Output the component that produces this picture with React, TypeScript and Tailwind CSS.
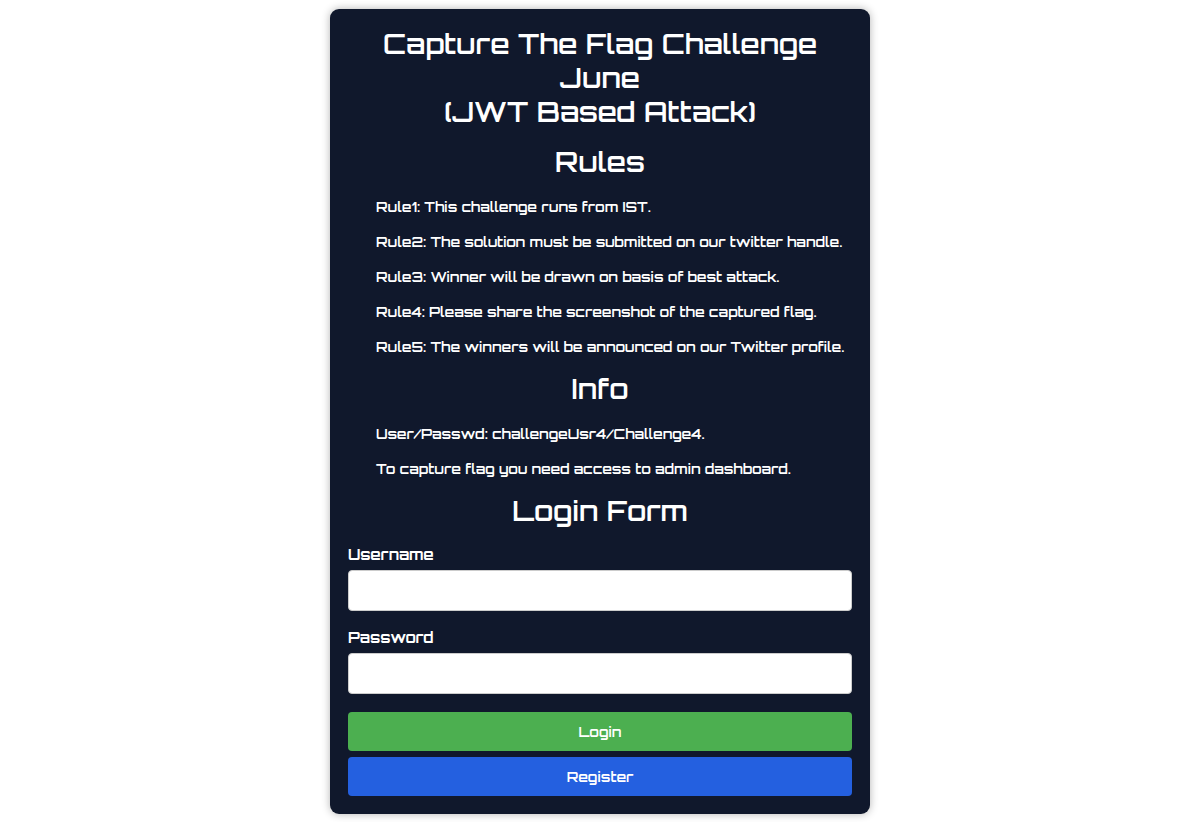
import React from "react";

const rules = [
    "Rule1: This challenge runs from IST.",
    "Rule2: The solution must be submitted on our twitter handle.",
    "Rule3: Winner will be drawn on basis of best attack.",
    "Rule4: Please share the screenshot of the captured flag.",
    "Rule5: The winners will be announced on our Twitter profile.",
];

const info = [
    "User/Passwd: challengeUsr4/Challenge4.",
    "To capture flag you need access to admin dashboard.",
];

function SectionTitle({ children }: { children: React.ReactNode }) {
    return <h2 className="mt-[15px] mb-[18px] text-center text-[28px] leading-[34px]">{children}</h2>;
}

function TextList({ items }: { items: string[] }) {
    return (
        <ul className="flex flex-col gap-[15px] pl-7">
            {items.map((item) => (
                <li key={item} className="whitespace-normal sm:whitespace-nowrap">
                    {item}
                </li>
            ))}
        </ul>
    );
}

function Field({ id, label, type }: { id: string; label: string; type: string }) {
    return (
        <div className="mb-[18px]">
            <label htmlFor={id} className="mb-1.5 block text-[15px] leading-[18px] font-bold">
                {label}
            </label>
            <input
                id={id}
                name={id}
                type={type}
                className="block h-[41px] w-full rounded border border-[#cccccc] bg-white px-3 text-gray-900"
            />
        </div>
    );
}

export default function App() {
    return (
        <main className="px-2 py-[9px] font-['Orbitron','DejaVu_Sans',sans-serif] text-[14px] leading-5 font-semibold text-white">
            <div className="mx-auto max-w-[540px] rounded-[9px] bg-[#10182c] p-[18px] shadow-[0_0_9px_rgba(0,0,0,0.3)]">
                <h1 className="mb-4 text-center text-[28px] leading-[34px]">
                    Capture The Flag Challenge June
                    <br />
                    (JWT Based Attack)
                </h1>

                <SectionTitle>Rules</SectionTitle>
                <TextList items={rules} />

                <SectionTitle>Info</SectionTitle>
                <TextList items={info} />

                <SectionTitle>Login Form</SectionTitle>
                <form onSubmit={(e) => e.preventDefault()}>
                    <Field id="username" label="Username" type="text" />
                    <Field id="password" label="Password" type="password" />

                    <div className="flex flex-col gap-1.5">
                        <button type="submit" className="h-[39px] w-full rounded bg-[#4caf50]">
                            Login
                        </button>
                        <button type="button" className="h-[39px] w-full rounded bg-[#2460e0]">
                            Register
                        </button>
                    </div>
                </form>
            </div>
        </main>
    );
}
